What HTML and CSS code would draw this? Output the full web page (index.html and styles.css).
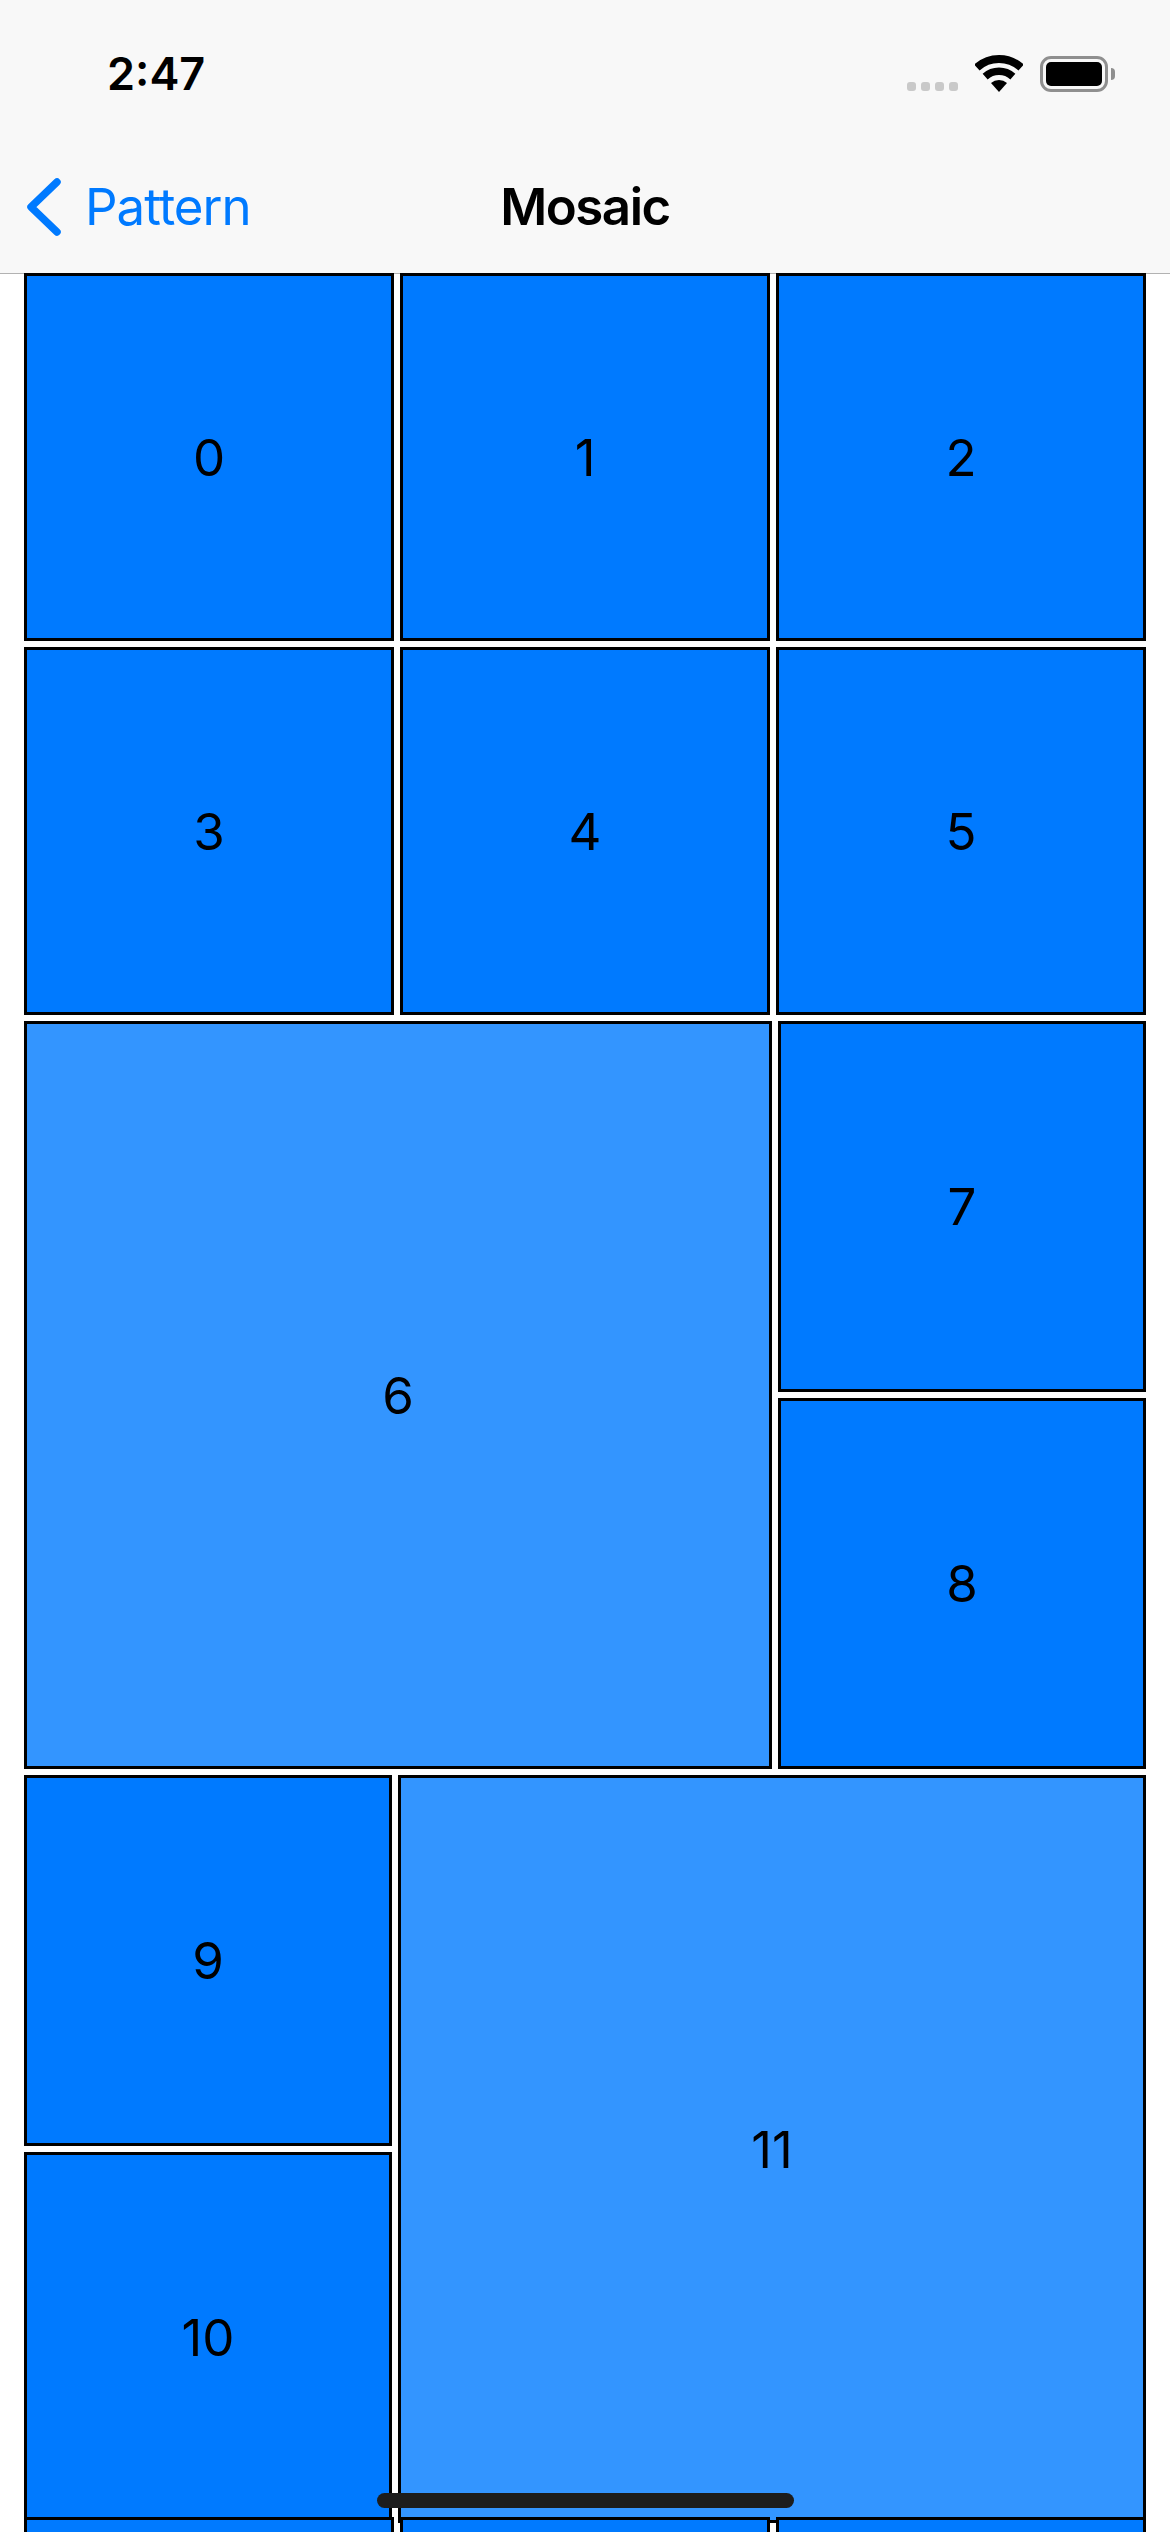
FILE: index.html
```html
<!DOCTYPE html>
<html lang="en">
<head>
    <meta charset="UTF-8">
    <meta name="viewport" content="width=device-width, initial-scale=1.0">
    <title>Mosaic</title>
    <link rel="stylesheet" href="styles.css">
</head>
<body>
    <header class="header">
        <div class="status">
            <span class="time">2:47</span>
            <div class="status-icons">
                <div class="signal"><i></i><i></i><i></i><i></i></div>
                <svg class="wifi" width="48" height="37" viewBox="0 0 48 37">
                    <path d="M1.9 12.5A33 33 0 0 1 46.1 12.5" fill="none" stroke="#000" stroke-width="8"/>
                    <path d="M10.15 21.6A20.7 20.7 0 0 1 37.85 21.6" fill="none" stroke="#000" stroke-width="7.5"/>
                    <path d="M24 37L16 28.1A12 12 0 0 1 32 28.1Z" fill="#000"/>
                </svg>
                <div class="battery"><div class="battery-fill"></div></div>
                <div class="battery-cap"></div>
            </div>
        </div>
        <nav class="nav">
            <a class="back">
                <svg class="chevron" width="34" height="58" viewBox="0 0 34 58">
                    <path d="M30 4L4 29L30 54" fill="none" stroke="#007aff" stroke-width="7.5" stroke-linecap="round" stroke-linejoin="round"/>
                </svg>
                <span>Pattern</span>
            </a>
            <h1 class="title">Mosaic</h1>
        </nav>
    </header>

    <main class="mosaic">
        <div class="row">
            <div class="tile">0</div>
            <div class="tile">1</div>
            <div class="tile">2</div>
        </div>
        <div class="row">
            <div class="tile">3</div>
            <div class="tile">4</div>
            <div class="tile">5</div>
        </div>
        <div class="row">
            <div class="tile big">6</div>
            <div class="stack">
                <div class="tile">7</div>
                <div class="tile">8</div>
            </div>
        </div>
        <div class="row">
            <div class="stack">
                <div class="tile">9</div>
                <div class="tile">10</div>
            </div>
            <div class="tile big">11</div>
        </div>
        <div class="row last">
            <div class="tile"></div>
            <div class="tile"></div>
            <div class="tile"></div>
        </div>
    </main>

    <div class="home-bar"></div>
</body>
</html>
```

FILE: styles.css
```css
html, body { margin: 0; padding: 0; }
body { width: 1170px; height: 2532px; overflow: hidden; background: #fff; font-family: Inter, "Liberation Sans", sans-serif; color: #000; }

.header { height: 273px; background: #f8f8f8; border-bottom: 1px solid #b2b2b2; }

.status { height: 132px; display: flex; align-items: flex-start; justify-content: space-between; padding-left: 107px; }
.time { margin-top: 47px; font-size: 45px; line-height: 54px; font-weight: 600; }
.status-icons { display: flex; align-items: flex-start; margin-top: 55px; padding-right: 55px; }
.signal { display: flex; gap: 5px; margin-top: 27px; margin-right: 17px; }
.signal i { display: block; width: 9px; height: 9px; border-radius: 3px; background: #c9c9c9; }
.wifi { margin-right: 17px; }
.battery { width: 68px; height: 36px; box-sizing: border-box; border: 3px solid #8f8f8f; border-radius: 11px; padding: 3px; margin-top: 1px; }
.battery-fill { height: 100%; background: #000; border-radius: 5px; }
.battery-cap { width: 4px; height: 12px; margin: 13px 0 0 3px; background: #8f8f8f; border-radius: 0 4px 4px 0; }

.nav { height: 141px; display: grid; grid-template-columns: 1fr auto 1fr; align-items: start; }
.back { display: flex; align-items: flex-start; color: #007aff; font-size: 51px; line-height: 62px; padding-left: 27px; }
.back span { margin-top: 44px; margin-left: 24px; letter-spacing: -1px; }
.chevron { margin-top: 46px; }
.title { grid-column: 2; margin: 44px 0 0; font-size: 51px; line-height: 62px; font-weight: 600; letter-spacing: -1.5px; }

.mosaic { display: flex; flex-direction: column; gap: 6px; height: 2259px; overflow: hidden; padding: 0 24px; margin-top: -1px; }
.row { display: flex; gap: 6px; flex: none; }
.row.last { margin-top: -12px; }
.stack { display: flex; flex-direction: column; gap: 6px; width: 368px; }
.tile { flex: 1; height: 368px; box-sizing: border-box; border: 3px solid #000; background: #007aff; display: flex; align-items: center; justify-content: center; font-size: 51px; }
.stack .tile { flex: none; height: 371px; }
.tile.big { flex: none; width: 748px; height: 748px; background: #3395ff; }

.home-bar { position: absolute; left: 377px; top: 2493px; width: 417px; height: 15px; border-radius: 8px; background: #1d1d1d; }
```
